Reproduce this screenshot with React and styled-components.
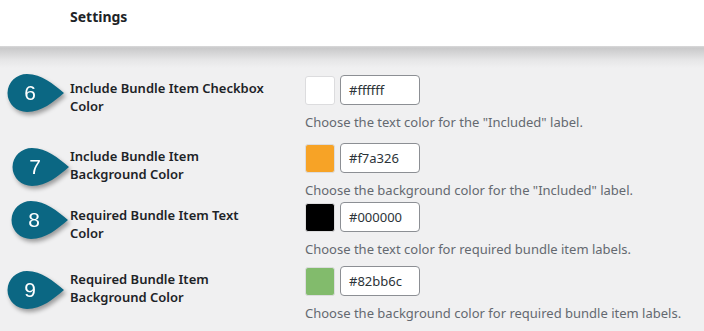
import React from 'react';
import styled, { createGlobalStyle } from 'styled-components';

const GlobalStyle = createGlobalStyle`
    body {
        margin: 0;
        background: #f0f0f1;
        font-family: "Noto Sans", "Open Sans", sans-serif;
        overflow: hidden;
    }
`

const Header = styled.div`
    height: 46px;
    background: #fff;
    padding: 7px 0 0 70px;
    box-sizing: border-box;
    font-size: 14px;
    font-weight: 700;
    line-height: 20px;
    color: #1d2327;
`

const Body = styled.div`
    background: linear-gradient(to bottom, #dadadb 0, #c9c9ca 2px, #e6e6e7 14px, #f0f0f1 22px);
    padding-top: 29px;
    height: 285px;
    box-sizing: border-box;
`

const Row = styled.div`
    position: relative;
    display: grid;
    grid-template-columns: 305px 1fr;
    margin-top: ${p => p.$gap}px;
`

const Label = styled.div`
    padding: 4px 0 0 70px;
    font-size: 13px;
    font-weight: 600;
    line-height: 18px;
    color: #1d2327;
`

const Field = styled.div`
    display: flex;
    flex-direction: column;
`

const Picker = styled.div`
    display: flex;
    gap: 5px;
    align-items: center;
    height: 30px;
`

const Swatch = styled.div`
    width: 30px;
    height: 29px;
    box-sizing: border-box;
    border-radius: 3px;
    border: 1px solid #dcdcde;
    background: ${p => p.$color};
`

const HexInput = styled.div`
    width: 80px;
    height: 30px;
    box-sizing: border-box;
    border: 1px solid #8c8f94;
    border-radius: 4px;
    background: #fff;
    padding-left: 8px;
    font-size: 13px;
    line-height: 28px;
    color: #2c3338;
`

const Description = styled.div`
    margin-top: 8px;
    font-size: 13px;
    line-height: 18px;
    height: 18px;
    color: #646970;
`

const Badge = styled.div`
    position: absolute;
    left: ${p => p.$x}px;
    top: ${p => p.$y}px;
    width: 60px;
    height: 40px;
    filter: drop-shadow(2px 3px 2px rgba(0, 0, 0, 0.35));

    svg {
        display: block;
    }
`

const BadgeNum = styled.span`
    position: absolute;
    left: 4px;
    top: 0;
    width: 40px;
    text-align: center;
    font-family: "Liberation Sans", Arial, sans-serif;
    font-size: 21px;
    line-height: 38px;
    color: #fff;
`

const rows = [
    { n: 6, label: ['Include Bundle Item Checkbox', 'Color'], color: '#ffffff', desc: 'Choose the text color for the "Included" label.', gap: 0, bx: 6, by: -1 },
    { n: 7, label: ['Include Bundle Item', 'Background Color'], color: '#f7a326', desc: 'Choose the background color for the "Included" label.', gap: 12, bx: 11, by: 5 },
    { n: 8, label: ['Required Bundle Item Text', 'Color'], color: '#000000', desc: 'Choose the text color for required bundle item labels.', gap: 3, bx: 10, by: -1 },
    { n: 9, label: ['Required Bundle Item', 'Background Color'], color: '#82bb6c', desc: 'Choose the background color for required bundle item labels.', gap: 8, bx: 6, by: 5 },
];

function Marker({ n, x, y }) {
    return (
        <Badge $x={x} $y={y}>
            <svg width="60" height="40" viewBox="0 0 60 40">
                <path d="M58 19 C47 10 36 0 21 0 A19.5 19 0 0 0 21 38 C36 38 47 28 58 19 Z" fill="#0b6783" />
            </svg>
            <BadgeNum>{n}</BadgeNum>
        </Badge>
    )
}

export default function App() {
    return (
        <>
            <GlobalStyle />
            <Header>Settings</Header>
            <Body>
                {rows.map(r => (
                    <Row key={r.n} $gap={r.gap}>
                        <Marker n={r.n} x={r.bx} y={r.by} />
                        <Label>{r.label[0]}<br />{r.label[1]}</Label>
                        <Field>
                            <Picker>
                                <Swatch $color={r.color} />
                                <HexInput>{r.color}</HexInput>
                            </Picker>
                            <Description>{r.desc}</Description>
                        </Field>
                    </Row>
                ))}
            </Body>
        </>
    )
}
